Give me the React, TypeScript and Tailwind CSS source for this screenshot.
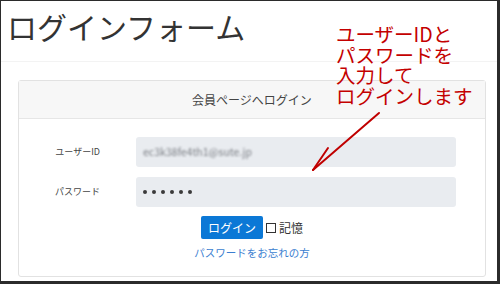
import React from 'react';

const JP = { fontFamily: '"Noto Sans CJK JP", "Noto Sans", sans-serif' };

export default function App() {
  return (
    <div
      className="relative w-[500px] h-[284px] overflow-hidden bg-white border-t border-l border-r-[3px] border-b-[3px] border-[#2b2b2b] text-[#333]"
      style={JP}
    >
      {/* Page title */}
      <h1 className="pl-[6px] pt-[7px] h-[61px] text-[30px] leading-[36px] font-normal text-[#333] border-b border-[#f3f3f3]">
        ログインフォーム
      </h1>

      {/* Login card */}
      <div className="ml-[17px] mt-[18px] w-[468px] h-[197px] border border-[#e2e2e2] rounded-[3px] flex flex-col">
        <div className="h-[38px] bg-[#f7f7f7] border-b border-[#e6e6e6] flex items-center justify-center text-[12px] text-[#444]">
          会員ページへログイン
        </div>

        <div className="flex flex-col pt-[18px]">
          <div className="flex items-center h-[30px]">
            <label className="w-[81px] text-right text-[9px] text-[#444]">ユーザーID</label>
            <div className="ml-[36px] w-[320px] h-[30px] rounded-[3px] bg-[#e9ecf0] flex items-center px-[7px]">
              <span className="text-[10.5px] text-[#7d8086] blur-[1.2px]">ec3k38fe4th1@sute.jp</span>
            </div>
          </div>
          <div className="flex items-center h-[30px] mt-[10px]">
            <label className="w-[81px] text-right text-[9px] text-[#444]">パスワード</label>
            <div className="ml-[36px] w-[320px] h-[30px] rounded-[3px] bg-[#e9ecf0] flex items-center gap-[5px] px-[7px]">
              {[0, 1, 2, 3, 4, 5].map(i => (
                <span key={i} className="w-[4px] h-[4px] rounded-full bg-[#3a3a3a]" />
              ))}
            </div>
          </div>

          <div className="flex items-center justify-center mt-[9px] h-[23px]">
            <button className="w-[62px] h-[23px] bg-[#0b78d6] rounded-[2px] text-white text-[12px] leading-none">
              ログイン
            </button>
            <span className="ml-[3px] w-[10px] h-[10px] border border-[#333] bg-white" />
            <span className="ml-[3px] text-[12px] text-[#333]">記憶</span>
          </div>

          <div className="text-center mt-[6px] text-[10.5px] text-[#3b7ed0]">
            パスワードをお忘れの方
          </div>
        </div>
      </div>

      {/* Annotation */}
      <div className="absolute left-[335px] top-[23px] text-[19.5px] leading-[20.5px] text-[#c40000] whitespace-nowrap">
        <div>ユーザーIDと</div>
        <div>パスワードを</div>
        <div>入力して</div>
        <div>ログインします</div>
      </div>

      <svg className="absolute left-0 top-0" width="500" height="284" viewBox="0 0 500 284" fill="none">
        <path d="M378 112 L312 169" stroke="#c00000" strokeWidth="2" strokeLinecap="round" />
        <path d="M312 169 L327 147" stroke="#c00000" strokeWidth="2" strokeLinecap="round" />
      </svg>
    </div>
  );
}
